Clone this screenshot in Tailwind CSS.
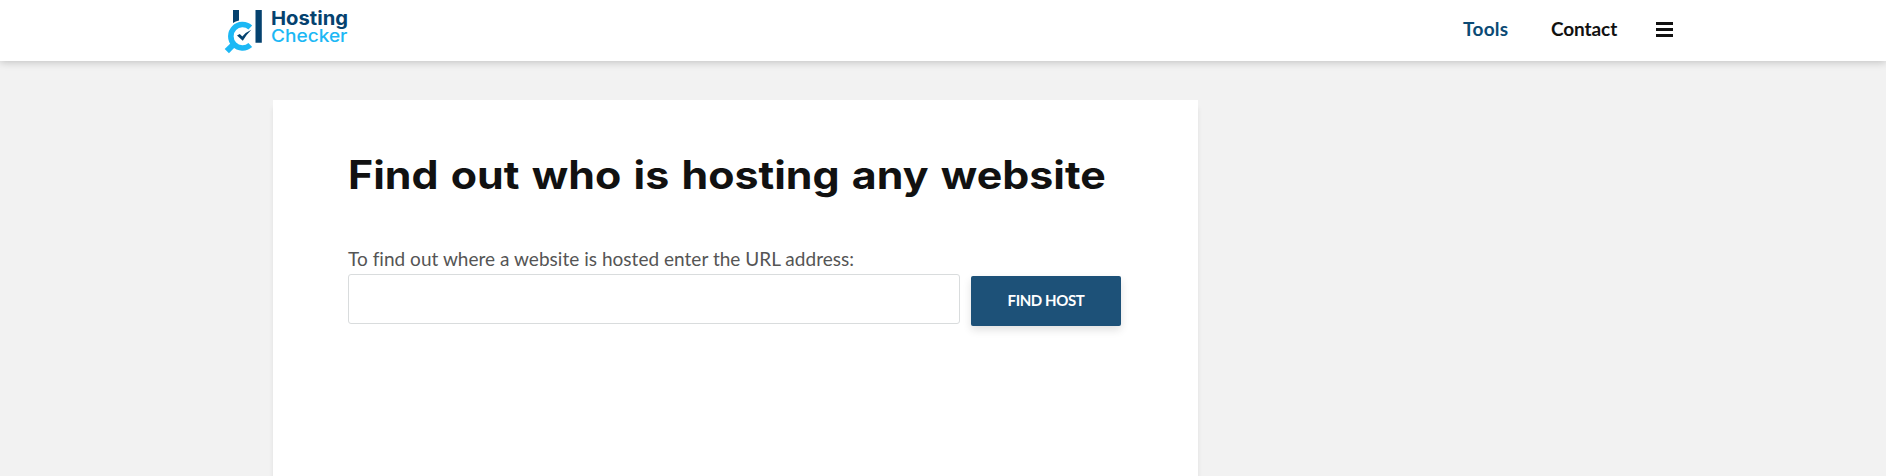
<!DOCTYPE html>
<html lang="en">
<head>
<meta charset="utf-8">
<title>Hosting Checker</title>
<script src="https://cdn.jsdelivr.net/npm/@tailwindcss/browser@4"></script>
</head>
<body class="h-screen overflow-hidden bg-[#f2f2f2] font-['Lato',sans-serif] flex flex-col">
<header class="relative z-10 h-[61px] shrink-0 bg-white shadow-[0_1px_8px_rgba(0,0,0,0.22)] flex items-start justify-between pl-[222px] pr-[213px]">
  <a href="#" aria-label="Hosting Checker" class="block">
    <svg class="block" width="132" height="60" viewBox="222 0 132 60">
      <path fill="#05426f" d="M233 10h6v10.500q-3.500 .8-6 2.600zM255.500 10h6.300v32.800h-6.300z"/>
      <path d="M250.300 27.500A11.700 11.700 0 1 0 250.300 45" fill="none" stroke="#1cb8f5" stroke-width="5.600"/>
      <path d="M233.500 44.500l-6.700 6.700" stroke="#1cb8f5" stroke-width="6"/>
      <path d="M237 35.500l2.800-1.500 2.500 2.600q3.600-4.600 9-6.900-4.600 4.500-8.500 11z" fill="#05426f"/>
      <text x="271" y="24.500" textLength="77" lengthAdjust="spacingAndGlyphs" class="font-['Inter',sans-serif] text-[19px] font-bold" fill="#05426f">Hosting</text>
      <text x="271" y="42.300" textLength="76.500" lengthAdjust="spacingAndGlyphs" class="font-['Inter',sans-serif] text-[17.500px] font-medium" fill="#1cb8f5">Checker</text>
    </svg>
  </a>
  <nav class="flex h-[58px] items-center text-[19px] font-bold text-[#111]">
    <a href="#" class="w-[88px] tracking-[0.3px] text-[#0b4a75]">Tools</a>
    <a href="#" class="w-[105px] tracking-[-0.1px]">Contact</a>
    <button aria-label="Menu" class="flex w-[17px] flex-col gap-[3px]">
      <span class="h-[3px] w-full bg-[#111]"></span><span class="h-[3px] w-full bg-[#111]"></span><span class="h-[3px] w-full bg-[#111]"></span>
    </button>
  </nav>
</header>
<main class="ml-[273px] mt-[39px] min-h-0 w-[925px] flex-1 bg-white pl-[75px] pt-[50px] shadow-[0_8px_5px_rgba(0,0,0,0.08)]">
  <h1 class="whitespace-nowrap font-['Inter',sans-serif] text-[39px] font-bold leading-[50px] text-[#111]"><span class="inline-block origin-left scale-x-[1.1] [word-spacing:1.900px]">Find out who is hosting any website</span></h1>
  <form class="mt-[46px]">
    <label for="url" class="mb-[2px] block whitespace-nowrap text-[19px] leading-[26px] tracking-[0.03px] text-[#555]">To find out where a website is hosted enter the URL address:</label>
    <div class="flex gap-[11px]">
      <input id="url" type="text" class="block h-[50px] w-[612px] rounded-[3px] border border-[#d9dcdd] bg-white px-3">
      <button type="button" class="mt-[2px] h-[50px] w-[150px] rounded-[2px] bg-[#1d5178] pb-[2px] text-[15px] font-bold tracking-[-0.4px] text-white shadow-[0_4px_8px_rgba(0,0,0,0.12)]">FIND HOST</button>
    </div>
  </form>
</main>
</body>
</html>
